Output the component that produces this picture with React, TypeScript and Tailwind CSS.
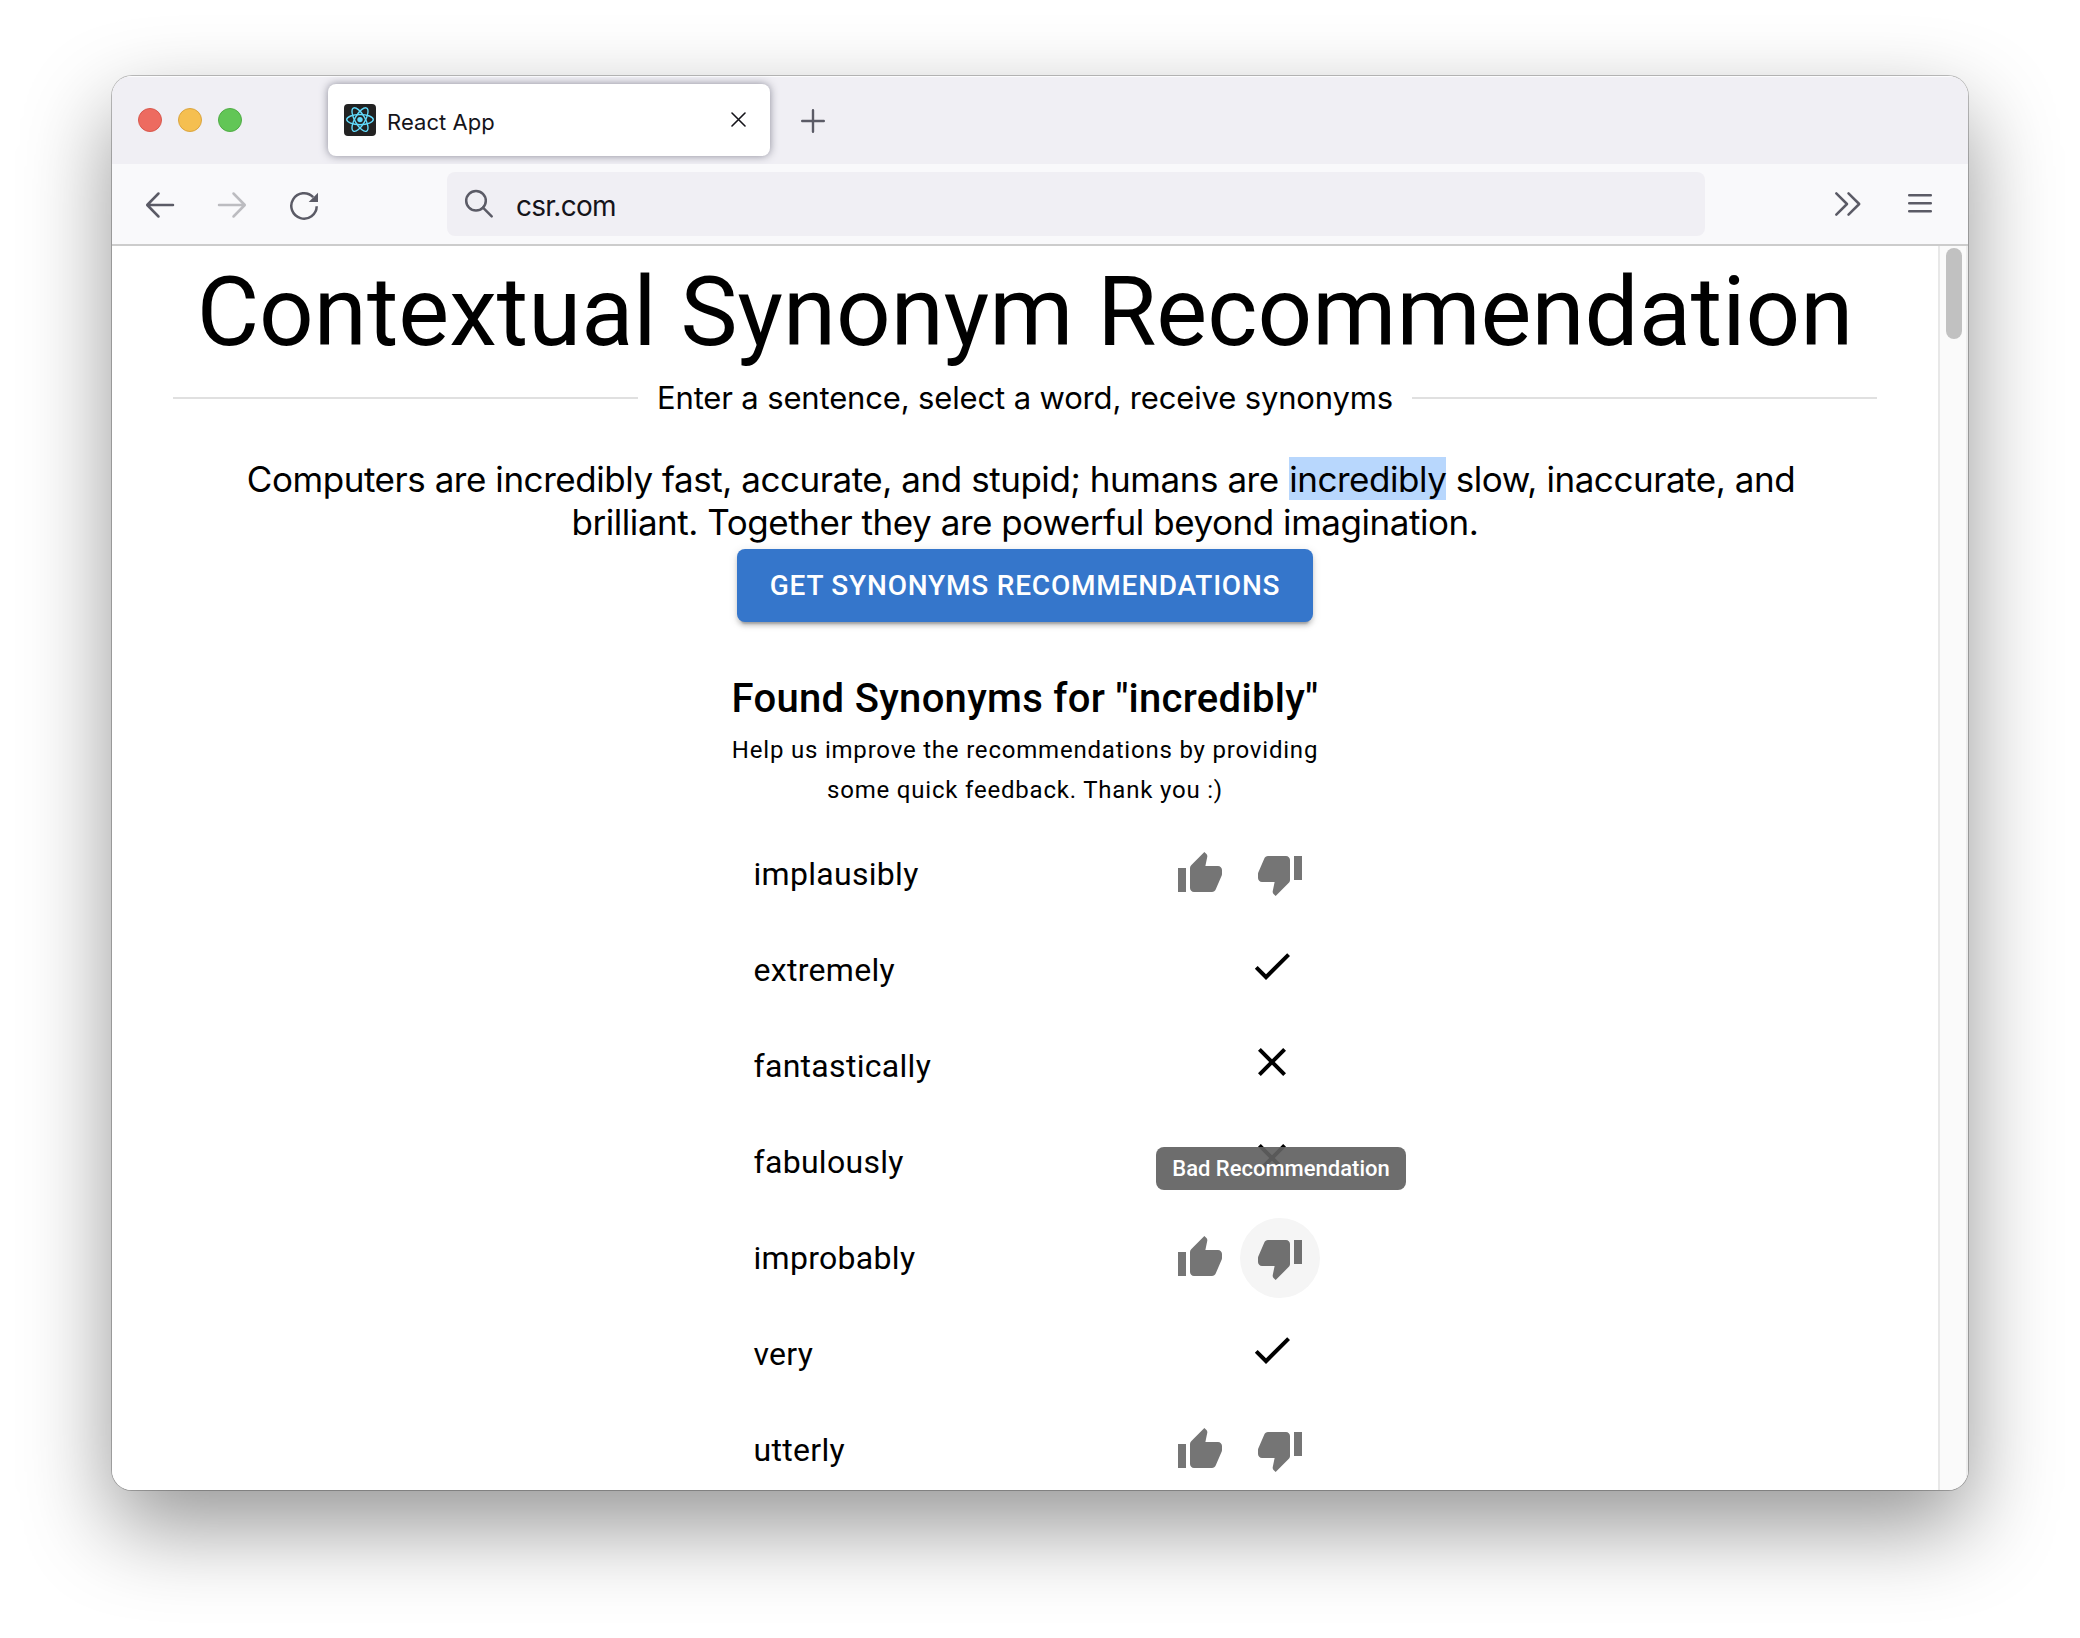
type Vote = "open" | "good" | "bad" | "hover";

const synonyms: { word: string; vote: Vote }[] = [
  { word: "implausibly", vote: "open" },
  { word: "extremely", vote: "good" },
  { word: "fantastically", vote: "bad" },
  { word: "fabulously", vote: "bad" },
  { word: "improbably", vote: "hover" },
  { word: "very", vote: "good" },
  { word: "utterly", vote: "open" },
];

const strokeIcon = {
  width: 32,
  height: 32,
  viewBox: "0 0 32 32",
  fill: "none",
  stroke: "currentColor",
  strokeWidth: 2.5,
  strokeLinecap: "round" as const,
  strokeLinejoin: "round" as const,
};

function ReactLogo() {
  return (
    <svg width="32" height="32" viewBox="0 0 32 32" className="shrink-0 rounded bg-[#222222]">
      <g fill="none" stroke="#61dafb" strokeWidth="1.4">
        <ellipse cx="16" cy="15.6" rx="13.3" ry="5.1" />
        <ellipse cx="16" cy="15.6" rx="13.3" ry="5.1" transform="rotate(60 16 15.6)" />
        <ellipse cx="16" cy="15.6" rx="13.3" ry="5.1" transform="rotate(120 16 15.6)" />
      </g>
      <circle cx="16" cy="15.6" r="2.7" fill="#61dafb" />
    </svg>
  );
}

function MaterialIcon({ d }: { d: string }) {
  return (
    <svg width="48" height="48" viewBox="0 0 24 24" fill="currentColor">
      <path d={d} />
    </svg>
  );
}

const THUMB_UP =
  "M1 21h4V9H1v12zm22-11c0-1.1-.9-2-2-2h-6.31l.95-4.57.03-.32c0-.41-.17-.79-.44-1.06L14.17 1 7.59 7.59C7.22 7.95 7 8.45 7 9v10c0 1.1.9 2 2 2h9c.83 0 1.54-.5 1.84-1.22l3.02-7.05c.09-.23.14-.47.14-.73v-2z";
const THUMB_DOWN =
  "M15 3H6c-.83 0-1.54.5-1.84 1.22l-3.02 7.05c-.09.23-.14.47-.14.73v2c0 1.1.9 2 2 2h6.31l-.95 4.57-.03.32c0 .41.17.79.44 1.06L9.83 23l6.59-6.59c.36-.36.58-.86.58-1.41V5c0-1.1-.9-2-2-2zm4 0v12h4V3h-4z";
const CHECK = "M9 16.17 4.83 12l-1.42 1.41L9 19 21 7l-1.41-1.41z";
const CLOSE =
  "M19 6.41 17.59 5 12 10.59 6.41 5 5 6.41 10.59 12 5 17.59 6.41 19 12 13.41 17.59 19 19 17.59 13.41 12z";

function TabBar() {
  return (
    <div className="flex h-[88px] shrink-0 items-center bg-[#f0eff4] pl-[26px] shadow-[inset_0_2px_1px_-1px_rgba(255,255,255,0.9)]">
      <div className="flex gap-4">
        <span className="size-6 rounded-full border border-[#d8584d] bg-[#ed6b60]" />
        <span className="size-6 rounded-full border border-[#dba53f] bg-[#f5bf50]" />
        <span className="size-6 rounded-full border border-[#50ac45] bg-[#62c656]" />
      </div>
      <div className="ml-[86px] flex h-[72px] w-[442px] items-center rounded-lg bg-white pr-6 pl-4 shadow-[0_0_8px_rgba(128,128,142,0.9)]">
        <ReactLogo />
        <span className="ml-[11px] pt-1 text-[22px] leading-8 tracking-[0.05px] text-[#15141a]">React App</span>
        <svg
          className="mb-px ml-auto text-[#15141a]"
          width="15"
          height="15"
          viewBox="0 0 15 15"
          fill="none"
          stroke="currentColor"
          strokeWidth="1.6"
          strokeLinecap="round"
        >
          <path d="M1 1l13 13M14 1L1 14" />
        </svg>
      </div>
      <svg
        className="mt-0.5 ml-[31px] text-[#5b5b66]"
        width="24"
        height="24"
        viewBox="0 0 24 24"
        fill="none"
        stroke="currentColor"
        strokeWidth="2.4"
        strokeLinecap="round"
      >
        <path d="M12 1.2v21.6M1.2 12h21.6" />
      </svg>
    </div>
  );
}

function Toolbar() {
  return (
    <div className="flex h-[82px] shrink-0 items-center border-b-2 border-[#cccccc] bg-[#f9f9fb] pl-8 text-[#5b5b66]">
      <div className="flex gap-10">
        <svg {...strokeIcon}>
          <path d="M29 17H3.5M14.5 5.5L3.2 17l11.3 11.5" />
        </svg>
        <svg {...strokeIcon} className="text-[#bcbcc0]">
          <path d="M3 17h25.5M17.5 5.5L28.8 17 17.5 28.5" />
        </svg>
        <svg {...strokeIcon}>
          <path d="M28.7 18.2A12.7 12.7 0 1 1 25.2 9.2" strokeLinecap="butt" />
          <path d="M30 4.7V14h-9.3z" fill="currentColor" stroke="none" />
        </svg>
      </div>
      <div className="ml-[127px] flex h-16 w-[1258px] items-center rounded-lg bg-[#f0eff4] pl-4">
        <svg {...strokeIcon}>
          <circle cx="13" cy="12.7" r="9.8" />
          <path d="M20 19.7l8.7 8.7" />
        </svg>
        <span className="ml-[21px] pt-[3px] text-[28px] leading-10 tracking-[-0.75px] text-[#15141a]">csr.com</span>
      </div>
      <div className="ml-[127px] flex gap-10">
        <svg {...strokeIcon}>
          <path d="M4.3 5.3L15 16 4.3 26.7M16.5 5.3L27.2 16 16.5 26.7" />
        </svg>
        <svg {...strokeIcon}>
          <path d="M5.2 7.3h21.6M5.2 15.3h21.6M5.2 23.3h21.6" />
        </svg>
      </div>
    </div>
  );
}

function Feedback({ vote }: { vote: Vote }) {
  if (vote === "good" || vote === "bad") {
    return (
      <div className="pr-6 pb-2 text-black">
        <MaterialIcon d={vote === "good" ? CHECK : CLOSE} />
      </div>
    );
  }
  return (
    <div className="flex text-[#757575]">
      <span className="flex size-20 items-center justify-center">
        <MaterialIcon d={THUMB_UP} />
      </span>
      {vote === "hover" ? (
        <span className="relative flex size-20 items-center justify-center rounded-full bg-[#f5f5f5] text-[#707070]">
          <MaterialIcon d={THUMB_DOWN} />
          <span className="absolute bottom-[108px] left-[41px] flex h-[43px] w-[250px] -translate-x-1/2 items-center justify-center rounded-lg bg-[#616161]/92 text-[22px] leading-none font-medium text-white">
            Bad Recommendation
          </span>
        </span>
      ) : (
        <span className="flex size-20 items-center justify-center">
          <MaterialIcon d={THUMB_DOWN} />
        </span>
      )}
    </div>
  );
}

function Page() {
  return (
    <main className="flex h-full flex-1 flex-col items-center overflow-hidden bg-white pt-2.5 text-black">
      <h1 className="shrink-0 font-[Roboto] text-[96px] leading-[112px] whitespace-nowrap">
        Contextual Synonym Recommendation
      </h1>
      <div className="mt-1.5 flex h-12 w-[1704px] shrink-0 items-center">
        <span className="h-0.5 flex-1 bg-[#e0e0e0]" />
        <span className="mx-[19px] self-start text-[31px] leading-[47px] tracking-[-0.15px] whitespace-nowrap">
          Enter a sentence, select a word, receive synonyms
        </span>
        <span className="h-0.5 flex-1 bg-[#e0e0e0]" />
      </div>
      <div className="mt-9 shrink-0 text-center text-[35px] leading-[43px] tracking-[-0.452px] whitespace-nowrap">
        <div className="h-[43px] pr-2">
          Computers are incredibly fast, accurate, and stupid; humans are{" "}
          <span className="-mt-px ml-px inline-block h-[43px] bg-[#b8d7fd] pt-px align-top">incredibly</span> slow,
          inaccurate, and
        </div>
        <div>brilliant. Together they are powerful beyond imagination.</div>
      </div>
      <button className="mt-[5px] h-[73px] w-[576px] shrink-0 rounded-lg bg-[#3576cb] text-center font-[Roboto] text-[28px] leading-[49px] font-medium tracking-[0.8px] whitespace-nowrap text-white shadow-[0_6px_2px_-4px_rgba(0,0,0,0.2),0_4px_4px_0_rgba(0,0,0,0.14),0_2px_10px_0_rgba(0,0,0,0.12)]">
        GET SYNONYMS RECOMMENDATIONS
      </button>
      <section className="mt-[45px] w-[590px] shrink-0 font-[Roboto]">
        <h2 className="text-center text-[40px] leading-[64px] font-medium tracking-[0.3px] whitespace-nowrap">
          Found Synonyms for "incredibly"
        </h2>
        <p className="h-[79px] text-center text-2xl leading-[39.84px] tracking-[0.8px]">
          Help us improve the recommendations by providing
          <br />
          some quick feedback. Thank you :)
        </p>
        <ul className="mt-4">
          {synonyms.map(({ word, vote }) => (
            <li key={word} className="flex h-24 items-center justify-between pl-[23.5px]">
              <span className="text-[32px] leading-[48px] tracking-[0.3px]">{word}</span>
              <Feedback vote={vote} />
            </li>
          ))}
        </ul>
      </section>
    </main>
  );
}

export default function App() {
  return (
    <div className="flex h-[1638px] w-[2080px] overflow-hidden bg-white px-28 pt-[76px] font-[Inter,sans-serif]">
      <div className="flex h-[1414px] w-[1856px] flex-col overflow-hidden rounded-[20px] bg-white shadow-[0_0_0_1px_rgba(0,0,0,0.24),0_36px_88px_rgba(0,0,0,0.42)]">
        <TabBar />
        <Toolbar />
        <div className="flex min-h-0 flex-1">
          <Page />
          <div className="w-[30px] border-x-2 border-l-[#e8e8e8] border-r-[#ededed] bg-[#fafafa] pt-0.5 pl-1.5">
            <div className="h-[91px] w-4 rounded-full bg-[#c1c1c1]" />
          </div>
        </div>
      </div>
    </div>
  );
}
